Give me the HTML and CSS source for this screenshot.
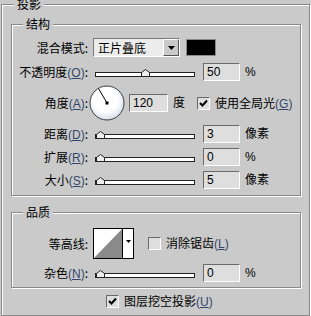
FILE: index.html
```html
<!DOCTYPE html>
<html lang="zh-CN">
<head>
  <meta charset="UTF-8" />
  <title>投影</title>
  <link rel="stylesheet" href="styles.css">
</head>
<body>

  <fieldset class="group outer">
    <legend>投影</legend>

    <fieldset class="group struct">
      <legend>结构</legend>

      <div class="row row-blend">
        <span class="label">混合模式:</span>
        <div class="select">
          <span class="select-text">正片叠底</span>
          <span class="select-btn"><svg width="7" height="4" viewBox="0 0 7 4"><path d="M0 0H7L3.5 4Z" fill="#000"/></svg></span>
        </div>
        <span class="swatch"></span>
      </div>

      <div class="row">
        <span class="label">不透明度<span class="key">(<u>O</u>)</span>:</span>
        <div class="slider"><div class="track"></div><svg class="thumb" style="left:48px" width="9" height="8" viewBox="0 0 9 8"><path d="M0.5 7.5V3.5L4.5 0.5L8.5 3.5V7.5Z" fill="#eee" stroke="#222"/></svg></div>
        <span class="field">50</span>
        <span class="unit">%</span>
      </div>

      <div class="row row-angle">
        <span class="label">角度<span class="key">(<u>A</u>)</span>:</span>
        <svg class="dial" width="36" height="36" viewBox="0 0 36 36">
          <defs>
            <radialGradient id="dialFill" cx="0.45" cy="0.4" r="0.6">
              <stop offset="0.6" stop-color="#ffffff"/>
              <stop offset="1" stop-color="#d9e0ec"/>
            </radialGradient>
          </defs>
          <circle cx="18" cy="18" r="17" fill="url(#dialFill)" stroke="#3c3c3c"/>
          <line x1="18" y1="18" x2="9.5" y2="3.5" stroke="#000" stroke-width="1"/>
          <rect x="16.5" y="16.5" width="3" height="3" fill="#000"/>
        </svg>
        <span class="field field-angle">120</span>
        <span class="unit">度</span>
        <span class="check checked"><svg width="11" height="11" viewBox="0 0 11 11"><path d="M2 5L4.5 7.5L9 2.5" fill="none" stroke="#000" stroke-width="2"/></svg></span>
        <span class="check-text">使用全局光<span class="key">(<u>G</u>)</span></span>
      </div>

      <div class="row">
        <span class="label">距离<span class="key">(<u>D</u>)</span>:</span>
        <div class="slider"><div class="track"></div><svg class="thumb" style="left:3px" width="9" height="8" viewBox="0 0 9 8"><path d="M0.5 7.5V3.5L4.5 0.5L8.5 3.5V7.5Z" fill="#eee" stroke="#222"/></svg></div>
        <span class="field">3</span>
        <span class="unit">像素</span>
      </div>

      <div class="row">
        <span class="label">扩展<span class="key">(<u>R</u>)</span>:</span>
        <div class="slider"><div class="track"></div><svg class="thumb" style="left:3px" width="9" height="8" viewBox="0 0 9 8"><path d="M0.5 7.5V3.5L4.5 0.5L8.5 3.5V7.5Z" fill="#eee" stroke="#222"/></svg></div>
        <span class="field">0</span>
        <span class="unit">%</span>
      </div>

      <div class="row">
        <span class="label">大小<span class="key">(<u>S</u>)</span>:</span>
        <div class="slider"><div class="track"></div><svg class="thumb" style="left:3px" width="9" height="8" viewBox="0 0 9 8"><path d="M0.5 7.5V3.5L4.5 0.5L8.5 3.5V7.5Z" fill="#eee" stroke="#222"/></svg></div>
        <span class="field">5</span>
        <span class="unit">像素</span>
      </div>
    </fieldset>

    <fieldset class="group quality">
      <legend>品质</legend>

      <div class="row row-contour">
        <span class="label">等高线:</span>
        <span class="contour">
          <svg width="41" height="31" viewBox="0 0 41 31">
            <rect x="0" y="0" width="41" height="31" fill="#fff"/>
            <polygon points="1,30 29,1 29,30" fill="#8a8a8a"/>
            <rect x="29" y="0" width="12" height="31" fill="#fff"/>
            <line x1="29.5" y1="0" x2="29.5" y2="31" stroke="#000"/>
            <rect x="0.5" y="0.5" width="40" height="30" fill="none" stroke="#000"/>
            <path d="M33 12H38L35.5 15Z" fill="#000"/>
          </svg>
        </span>
        <span class="check"></span>
        <span class="check-text">消除锯齿<span class="key">(<u>L</u>)</span></span>
      </div>

      <div class="row">
        <span class="label">杂色<span class="key">(<u>N</u>)</span>:</span>
        <div class="slider"><div class="track"></div><svg class="thumb" style="left:3px" width="9" height="8" viewBox="0 0 9 8"><path d="M0.5 7.5V3.5L4.5 0.5L8.5 3.5V7.5Z" fill="#eee" stroke="#222"/></svg></div>
        <span class="field">0</span>
        <span class="unit">%</span>
      </div>
    </fieldset>

    <div class="row row-knockout">
      <span class="check checked"><svg width="11" height="11" viewBox="0 0 11 11"><path d="M2 5L4.5 7.5L9 2.5" fill="none" stroke="#000" stroke-width="2"/></svg></span>
      <span class="check-text">图层挖空投影<span class="key">(<u>U</u>)</span></span>
    </div>
  </fieldset>

</body>
</html>
```

FILE: styles.css
```css
body {
  margin: 0;
  height: 316px;
  overflow: hidden;
  background: #cacaca;
  color: #000;
  font-family: "Noto Sans CJK SC", "Liberation Sans", sans-serif;
  font-size: 12px;
  line-height: 14px;
}

.group {
  margin: 0;
  padding: 0;
  min-width: 0;
  box-sizing: border-box;
  border: 1px solid #8a8a8a;
  box-shadow: inset 1px 1px 0 #fff, 1px 1px 0 #fff;
}

.group > legend {
  padding: 0 3px;
  line-height: 14px;
  background: #cacaca;
}

.outer {
  width: 309px;
  margin: -3px 0 0 1px;
  padding: 0 8px 7px 9px;
}

.outer > legend {
  margin-left: 3px;
}

.struct {
  margin-top: 6px;
  padding: 7px 0 6px 0;
}

.struct > legend,
.quality > legend {
  margin-left: 11px;
}

.quality {
  margin-top: 9px;
  padding: 9px 0 5px 0;
}

.row {
  display: flex;
  align-items: center;
  height: 18px;
  margin-top: 5px;
}

.row-blend {
  height: 19px;
  margin-top: 0;
}

.row-blend + .row {
  margin-top: 6px;
}

.row-angle {
  height: 36px;
  margin-top: 4px;
}

.row-angle + .row {
  margin-top: 4px;
}

.row-contour {
  height: 31px;
  margin-top: 0;
}

.label {
  flex: none;
  width: 76px;
  text-align: right;
  white-space: nowrap;
}

.key {
  color: #34466a;
  font-family: "Liberation Sans", sans-serif;
}

/* dropdown + colour */
.select {
  display: flex;
  width: 87px;
  height: 19px;
  margin-left: 5px;
  box-sizing: border-box;
  border: 1px solid;
  border-color: #7a7a7a #fff #fff #7a7a7a;
  background: #ececec;
}

.select-text {
  flex: 1;
  padding-left: 4px;
  line-height: 17px;
}

.select-btn {
  display: flex;
  align-items: center;
  justify-content: center;
  width: 16px;
  box-sizing: border-box;
  border: 1px solid;
  border-color: #fff #555 #555 #fff;
  background: #cacaca;
}

.swatch {
  width: 30px;
  height: 17px;
  margin-left: 6px;
  box-sizing: border-box;
  border: 1px solid #8a8a8a;
  background: #000;
}

/* slider */
.slider {
  position: relative;
  width: 102px;
  height: 9px;
  margin-left: 5px;
}

.track {
  width: 100px;
  height: 5px;
  margin: 4px 0 0 2px;
  box-sizing: border-box;
  border: 1px solid #222;
  background: #fff;
}

.thumb {
  position: absolute;
  top: 1px;
  display: block;
}

.field {
  width: 37px;
  height: 18px;
  margin-left: 8px;
  padding-left: 3px;
  box-sizing: border-box;
  border: 1px solid;
  border-color: #6a6a6a #fff #fff #6a6a6a;
  background: #dedede;
  font-family: "Liberation Sans", sans-serif;
  font-size: 12px;
  line-height: 16px;
}

.unit {
  margin-left: 5px;
  font-family: "Liberation Sans", "Noto Sans CJK SC", sans-serif;
}

.dial {
  display: block;
  margin-left: 1px;
}

.field-angle {
  width: 39px;
  margin-left: 4px;
}

/* checkboxes */
.check {
  display: flex;
  align-items: center;
  justify-content: center;
  flex: none;
  width: 13px;
  height: 13px;
  margin-left: 10px;
  box-sizing: border-box;
  border: 1px solid;
  border-color: #6a6a6a #fff #fff #6a6a6a;
  background: #dedede;
}

.check-text {
  margin-left: 5px;
  white-space: nowrap;
}

.row-angle .check {
  margin-left: 12px;
}

.contour {
  display: block;
  height: 31px;
  margin-left: 5px;
}

.contour svg {
  display: block;
}

.row-contour .check {
  margin-left: 14px;
}

.row-knockout {
  height: 13px;
  margin-top: 7px;
}

.row-knockout .check {
  margin-left: 95px;
}
```
